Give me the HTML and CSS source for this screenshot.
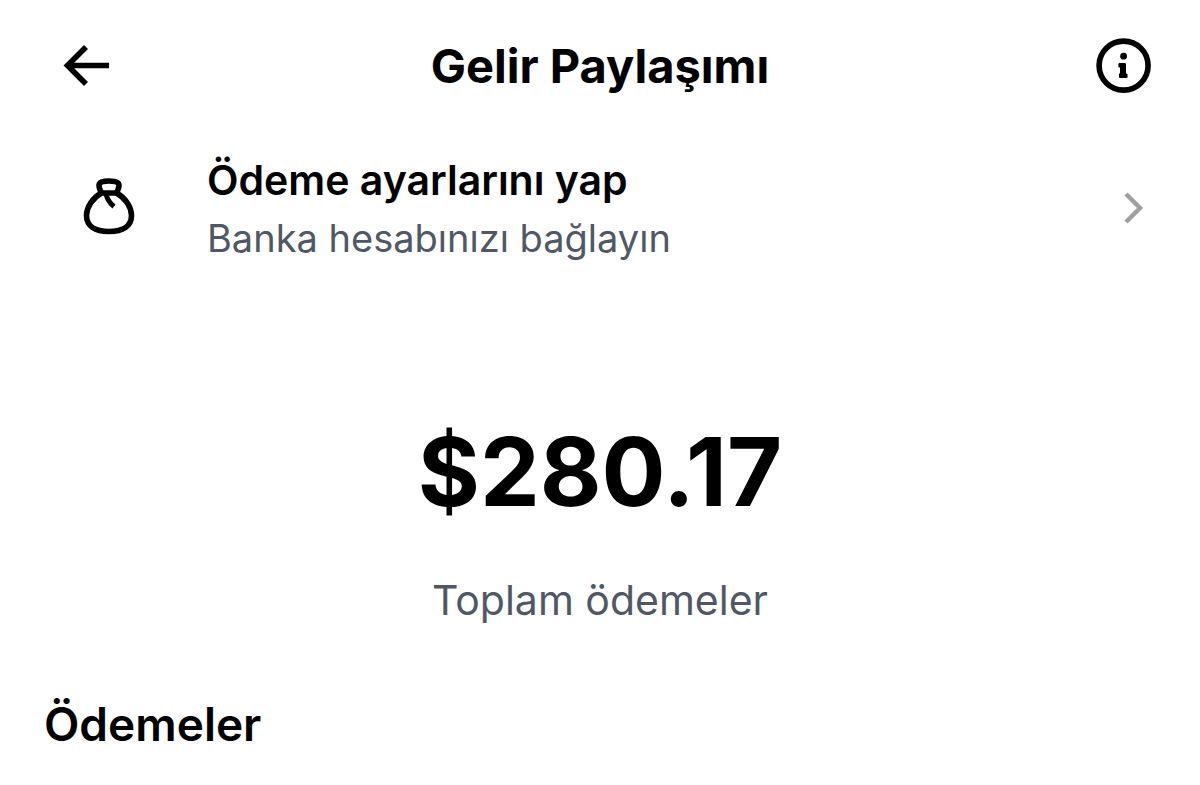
FILE: index.html
```html
<!DOCTYPE html>
<html lang="tr">
<head>
    <meta charset="UTF-8">
    <meta name="viewport" content="width=device-width, initial-scale=1.0">
    <title>Gelir Paylaşımı</title>
    <link rel="stylesheet" href="styles.css">
</head>
<body>
    <header class="topbar">
        <button class="icon-button back" type="button" aria-label="Geri">
            <svg width="48" height="48" viewBox="0 0 48 48" fill="none" stroke="currentColor" stroke-width="5.6">
                <path d="M47 23.5H6M24 5L5.5 23.5 24 42"/>
            </svg>
        </button>
        <h1>Gelir Paylaşımı</h1>
        <button class="icon-button info" type="button" aria-label="Bilgi">
            <svg width="56" height="56" viewBox="0 0 56 56">
                <circle cx="27.6" cy="27.6" r="24.5" fill="none" stroke="currentColor" stroke-width="5.6"/>
                <circle cx="27.6" cy="18.2" r="3.4" fill="currentColor"/>
                <path d="M23.600 25h5.200q1.200 0 1.200 1.200V35.500q1.500 0 1.500 1v2.500q0 1-1 1h-6.500q-1 0-1-1V36q0-.8 1-.8V29.600h-.6q-1 0-1-1V26.200q0-1.200 1.200-1.200z" fill="currentColor"/>
            </svg>
        </button>
    </header>
    <main>
        <a class="setup" href="#">
            <svg width="54" height="60" viewBox="0 0 54 60" fill="none" stroke="currentColor" stroke-width="5.6" stroke-linejoin="round">
                <path d="M19.500 15C18 12 17 10 17 7.500 17 4.500 20.500 3 27 3s10 1.500 10 4.500c0 2.500-1 4.500-2.500 7.500z"/>
                <path d="M19.500 15C10.500 20 4.500 29 4.500 37.500 4.500 48 13 53.500 27 53.500S49.500 48 49.500 37.500C49.500 29 43.500 20 34.500 15"/>
                <path d="M24 15c.5 5 3 9.500 8 13.500" stroke-width="5"/>
            </svg>
            <div class="setup-text">
                <h2>Ödeme ayarlarını yap</h2>
                <p>Banka hesabınızı bağlayın</p>
            </div>
            <svg class="chevron" width="20" height="32" viewBox="0 0 20 32" fill="none" stroke="currentColor" stroke-width="4.4">
                <path d="M2 2l14 14L2 30"/>
            </svg>
        </a>
        <section class="total">
            <div class="amount">$280.17</div>
            <p>Toplam ödemeler</p>
        </section>
        <h2 class="payments">Ödemeler</h2>
    </main>
</body>
</html>
```

FILE: styles.css
```css
* {
    box-sizing: border-box;
}
body {
    margin: 0;
    background-color: white;
    color: black;
    font-family: Inter, sans-serif;
}
h1, h2, p {
    margin: 0;
}
.topbar {
    display: grid;
    grid-template-columns: 1fr auto 1fr;
    align-items: center;
    padding: 36px 48px 34px;
}
h1 {
    font-size: 47px;
    line-height: 60px;
    font-weight: 700;
}
.icon-button {
    display: flex;
    padding: 0;
    border: none;
    background: none;
    color: inherit;
    cursor: pointer;
}
.back {
    justify-self: start;
    margin-left: 14px;
}
.info {
    justify-self: end;
}
.setup {
    display: flex;
    align-items: center;
    padding: 20px 56px 20px 82px;
    color: inherit;
    text-decoration: none;
}
.setup-text {
    flex: 1;
    margin-left: 71px;
}
.setup h2 {
    font-size: 41px;
    line-height: 60px;
    font-weight: 600;
}
.setup p, .total p {
    color: #505866;
    font-size: 38px;
    line-height: 56px;
}
.chevron {
    color: #a0a0a0;
}
.total {
    padding-top: 126px;
    text-align: center;
}
.amount {
    font-size: 95px;
    line-height: 120px;
    font-weight: 700;
}
.total p {
    margin-top: 40px;
    font-size: 41px;
}
.payments {
    padding: 66px 44px 24px;
    font-size: 46px;
    line-height: 60px;
    font-weight: 600;
}
```
